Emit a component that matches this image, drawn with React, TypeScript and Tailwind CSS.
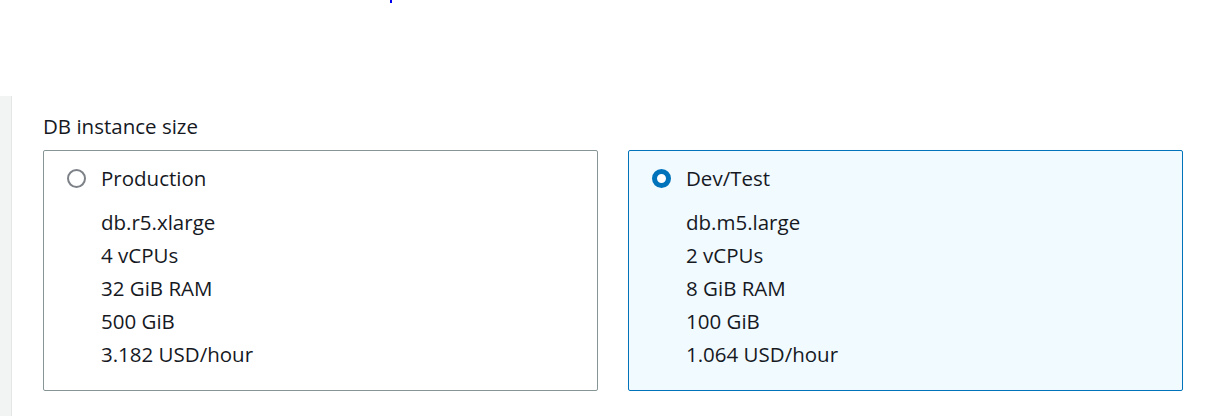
import React from "react";

type Opt = { title: string; lines: string[]; checked: boolean };

const opts: Opt[] = [
  { title: "Production", lines: ["db.r5.xlarge", "4 vCPUs", "32 GiB RAM", "500 GiB", "3.182 USD/hour"], checked: false },
  { title: "Dev/Test", lines: ["db.m5.large", "2 vCPUs", "8 GiB RAM", "100 GiB", "1.064 USD/hour"], checked: true },
];

function Card({ o }: { o: Opt }) {
  return (
    <div
      className={
        "w-[555px] h-[241px] border rounded-[2px] pl-[23px] pt-[11px] " +
        (o.checked ? "border-[#0073bb] bg-[#f1faff]" : "border-[#879596] bg-white")
      }
    >
      <div className="flex items-center h-[33px]">
        {o.checked ? (
          <div className="w-[19px] h-[19px] rounded-full border-[5px] border-[#0073bb] bg-white" />
        ) : (
          <div className="w-[19px] h-[19px] rounded-full border-2 border-[#7d8288] bg-white" />
        )}
        <span className="ml-[15px]">{o.title}</span>
      </div>
      <div className="mt-[11px] pl-[34px] flex flex-col">
        {o.lines.map((l) => (
          <div key={l} className="h-[33px] leading-[33px]">
            {l}
          </div>
        ))}
      </div>
    </div>
  );
}

export default function App() {
  return (
    <div
      className="w-[1205px] h-[416px] bg-white flex flex-col overflow-hidden text-[#16191f] text-[20.5px] leading-[33px]"
      style={{ fontFamily: '"Open Sans", "Noto Sans", sans-serif' }}
    >
      <div className="h-[96px] relative">
        <div className="absolute left-[390px] top-0 w-[2px] h-[3px] bg-[#0000ee]" />
      </div>
      <div className="flex flex-1">
        <div className="w-[12px] bg-[#f2f3f3] border-r border-[#e4e6e6]" />
        <div className="pl-[31px] pt-[14px] flex flex-col">
          <div className="h-[33px]">DB instance size</div>
          <div className="mt-[7px] flex gap-[30px]">
            {opts.map((o) => (
              <Card key={o.title} o={o} />
            ))}
          </div>
        </div>
      </div>
    </div>
  );
}
